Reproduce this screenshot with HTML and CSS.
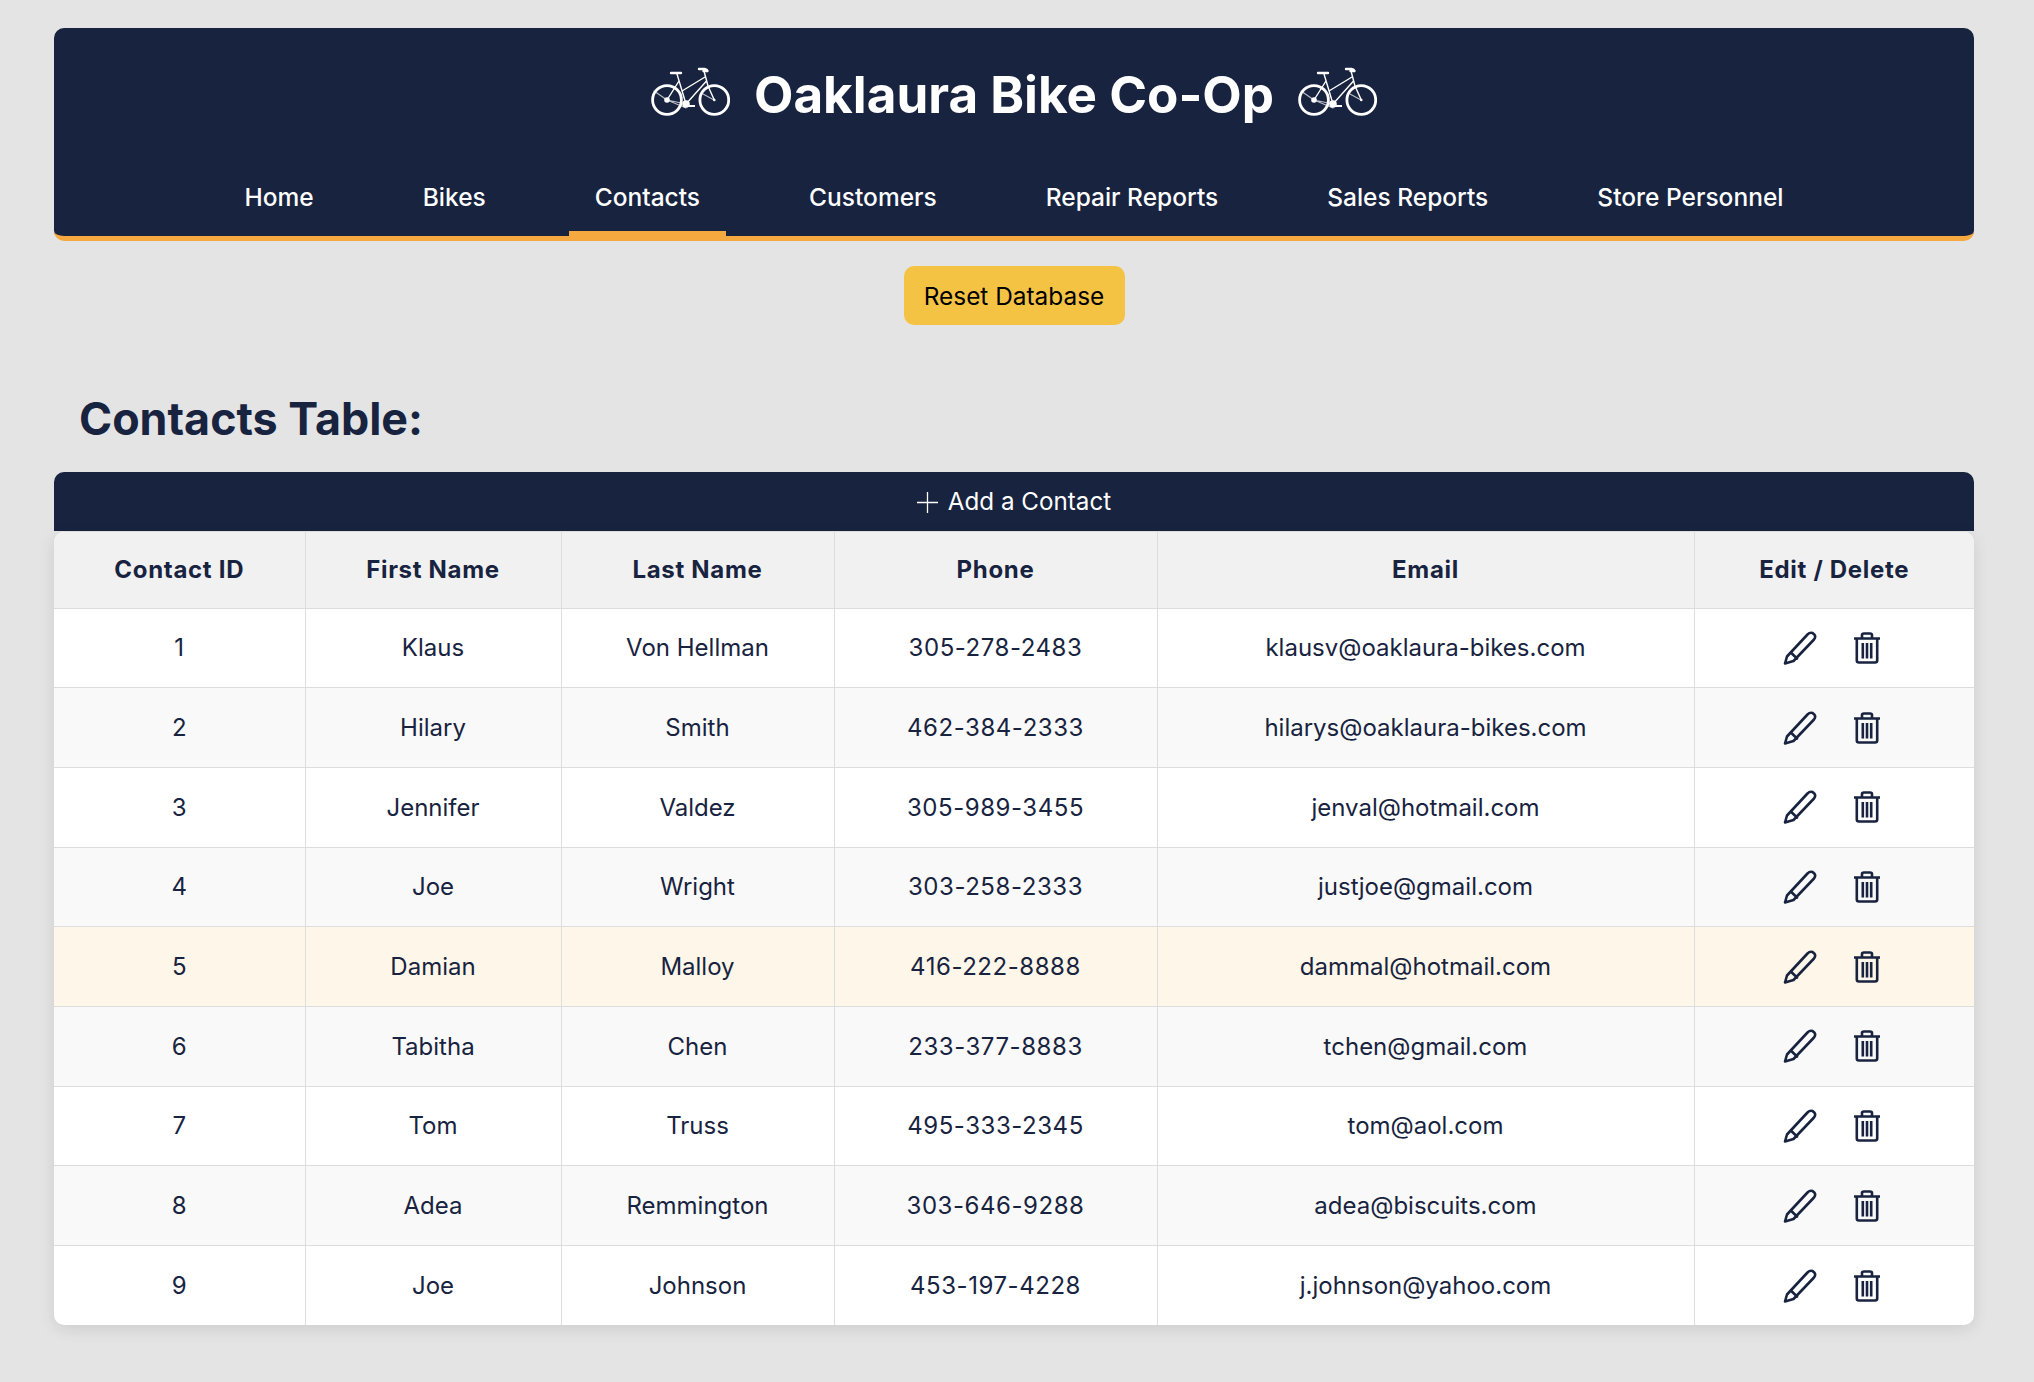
FILE: index.html
```html
<!DOCTYPE html>
<html lang="en">
<head>
<meta charset="utf-8">
<title>Oaklaura Bike Co-Op</title>
<link rel="stylesheet" href="styles.css">
</head>
<body>
<svg class="defs" width="0" height="0" aria-hidden="true">
  <defs>
    <symbol id="bike" viewBox="0 0 79 49">
      <g fill="none" stroke="#fff" stroke-linecap="round" stroke-linejoin="round">
        <circle cx="16" cy="33" r="14.4" stroke-width="2.800"/>
        <circle cx="63.3" cy="33" r="14.4" stroke-width="2.800"/>
        <path d="M26 7 35 37M53 4 57 19 63.3 33M54 10 31 24M55.5 14 35 37M28 14 16 33" stroke-width="1.400"/>
        <path d="M16 33 35 37M16 33 35 41M3 24 16 33M52 27 63 33" stroke-width="1.100" opacity=".7"/>
        <path d="M20 6h10M48 2h5.5q2.500 .5 3 2h-4" stroke-width="2.400"/>
      </g>
      <circle cx="35" cy="37" r="3.800" fill="#fff"/>
      <circle cx="16" cy="33" r="2.800" fill="#fff"/>
      <circle cx="63.300" cy="33" r="1.300" fill="#fff"/>
      <rect x="36" y="38" width="8" height="2" fill="#fff"/>
    </symbol>
    <symbol id="pencil" viewBox="0 0 34 34">
      <path d="M2 32.500 4 25.500 24.500 3.500Q27 1 29.500 2L31.500 3.800Q33 6 31 8.500L10.500 30ZM7.800 21.500 14 27.500" fill="none" stroke="currentColor" stroke-width="2.600" stroke-linejoin="round" stroke-linecap="round"/>
    </symbol>
    <symbol id="trash" viewBox="0 0 28 32">
      <path d="M1 6.500H27M9 6V3Q9 1.500 11 1.500H17Q19 1.500 19 3V6M3.800 7V28.500Q3.800 30.500 6 30.500H22Q24.200 30.500 24.200 28.500V7M9.800 11V26.500M14 11V26.500M18.200 11V26.500" fill="none" stroke="currentColor" stroke-width="2.600"/>
    </symbol>
  </defs>
</svg>
<div class="page">
  <header class="site-header">
    <div class="brand">
      <svg class="bike"><use href="#bike"/></svg>
      <h1 class="brand-title">Oaklaura Bike Co-Op</h1>
      <svg class="bike"><use href="#bike"/></svg>
    </div>
    <nav class="nav">
      <a class="nav-link" href="#">Home</a>
      <a class="nav-link" href="#">Bikes</a>
      <a class="nav-link is-active" href="#">Contacts</a>
      <a class="nav-link" href="#">Customers</a>
      <a class="nav-link" href="#">Repair Reports</a>
      <a class="nav-link" href="#">Sales Reports</a>
      <a class="nav-link" href="#">Store Personnel</a>
    </nav>
  </header>
  <div class="reset-row"><button class="reset-btn" type="button">Reset Database</button></div>
  <h2 class="section-title">Contacts Table:</h2>
  <button class="add-bar" type="button">
    <svg class="plus" viewBox="0 0 21 21" aria-hidden="true"><path d="M0 10.500H21M10.500 0V21" stroke="#fff" stroke-width="1.300"/></svg>
    <span>Add a Contact</span>
  </button>
  <div class="table-card">
    <table class="contacts">
      <colgroup>
        <col class="c-id"><col class="c-first"><col class="c-last"><col class="c-phone"><col class="c-email"><col class="c-actions">
      </colgroup>
      <thead>
        <tr><th>Contact ID</th><th>First Name</th><th>Last Name</th><th>Phone</th><th>Email</th><th>Edit / Delete</th></tr>
      </thead>
      <tbody>
        <tr><td>1</td><td>Klaus</td><td>Von Hellman</td><td class="phone">305-278-2483</td><td>klausv@oaklaura-bikes.com</td><td><div class="actions"><svg class="i-pencil"><use href="#pencil"/></svg><svg class="i-trash"><use href="#trash"/></svg></div></td></tr>
        <tr><td>2</td><td>Hilary</td><td>Smith</td><td class="phone">462-384-2333</td><td>hilarys@oaklaura-bikes.com</td><td><div class="actions"><svg class="i-pencil"><use href="#pencil"/></svg><svg class="i-trash"><use href="#trash"/></svg></div></td></tr>
        <tr><td>3</td><td>Jennifer</td><td>Valdez</td><td class="phone">305-989-3455</td><td>jenval@hotmail.com</td><td><div class="actions"><svg class="i-pencil"><use href="#pencil"/></svg><svg class="i-trash"><use href="#trash"/></svg></div></td></tr>
        <tr><td>4</td><td>Joe</td><td>Wright</td><td class="phone">303-258-2333</td><td>justjoe@gmail.com</td><td><div class="actions"><svg class="i-pencil"><use href="#pencil"/></svg><svg class="i-trash"><use href="#trash"/></svg></div></td></tr>
        <tr class="is-hover"><td>5</td><td>Damian</td><td>Malloy</td><td class="phone">416-222-8888</td><td>dammal@hotmail.com</td><td><div class="actions"><svg class="i-pencil"><use href="#pencil"/></svg><svg class="i-trash"><use href="#trash"/></svg></div></td></tr>
        <tr><td>6</td><td>Tabitha</td><td>Chen</td><td class="phone">233-377-8883</td><td>tchen@gmail.com</td><td><div class="actions"><svg class="i-pencil"><use href="#pencil"/></svg><svg class="i-trash"><use href="#trash"/></svg></div></td></tr>
        <tr><td>7</td><td>Tom</td><td>Truss</td><td class="phone">495-333-2345</td><td>tom@aol.com</td><td><div class="actions"><svg class="i-pencil"><use href="#pencil"/></svg><svg class="i-trash"><use href="#trash"/></svg></div></td></tr>
        <tr><td>8</td><td>Adea</td><td>Remmington</td><td class="phone">303-646-9288</td><td>adea@biscuits.com</td><td><div class="actions"><svg class="i-pencil"><use href="#pencil"/></svg><svg class="i-trash"><use href="#trash"/></svg></div></td></tr>
        <tr><td>9</td><td>Joe</td><td>Johnson</td><td class="phone">453-197-4228</td><td>j.johnson@yahoo.com</td><td><div class="actions"><svg class="i-pencil"><use href="#pencil"/></svg><svg class="i-trash"><use href="#trash"/></svg></div></td></tr>
      </tbody>
    </table>
  </div>
</div>
</body>
</html>
```
FILE: styles.css
```css
* { box-sizing: border-box; }
html, body { margin: 0; }
body {
  background: #e4e4e4;
  color: #18233f;
  font-family: Inter, "Liberation Sans", sans-serif;
  font-size: 24px;
}
.defs { position: absolute; }
.page { padding: 28px 60px 58px 54px; }
.site-header {
  height: 213px;
  background: #18233f;
  border-bottom: 5px solid #f5a93f;
  border-radius: 10px;
  color: #fff;
}
.brand {
  display: flex;
  justify-content: center;
  align-items: center;
  gap: 24px;
  height: 126px;
}
.bike { width: 79px; height: 49px; }
.brand-title { margin: 0; padding-top: 5px; font-size: 51.2px; font-weight: 700; line-height: 60px; }
.nav { display: flex; justify-content: center; gap: 58px; height: 82px; }
.nav-link {
  display: flex;
  align-items: center;
  padding: 8px 25.5px 0;
  color: #fff;
  text-decoration: none;
  font-size: 24.5px;
  font-weight: 500;
  border-bottom: 5px solid transparent;
}
.nav-link.is-active { border-bottom-color: #f5a93f; }
.reset-row { display: flex; justify-content: center; margin-top: 25px; }
.reset-btn {
  width: 221px;
  height: 59px;
  padding: 0;
  border: 0;
  border-radius: 10px;
  background: #f5c344;
  color: #000;
  font: 400 24.4px Inter, sans-serif;
}
.section-title {
  margin: 65px 0 0;
  padding-left: 25px;
  height: 82px;
  font-size: 44.8px;
  line-height: 58px;
  font-weight: 700;
}
.add-bar {
  display: flex;
  justify-content: center;
  align-items: center;
  gap: 10px;
  width: 100%;
  height: 59px;
  padding: 0;
  border: 0;
  border-radius: 10px 10px 0 0;
  background: #18233f;
  color: #fff;
  font: 400 24.2px Inter, sans-serif;
}
.plus { width: 21px; height: 21px; margin-top: 2px; }
.table-card {
  margin-top: 1px;
  background: #fff;
  border-radius: 10px;
  overflow: hidden;
  box-shadow: 0 4px 16px rgba(0, 0, 0, .1);
}
.contacts { width: 100%; border-collapse: collapse; table-layout: fixed; }
.c-id { width: 251px; }
.c-first { width: 256px; }
.c-last { width: 273px; }
.c-phone { width: 323px; }
.c-email { width: 537px; }
.contacts th, .contacts td {
  text-align: center;
  border-right: 1px solid #ddd;
  border-bottom: 1px solid #ddd;
  padding: 0;
}
.contacts th:last-child, .contacts td:last-child { border-right: 0; }
.contacts tr:last-child td { border-bottom: 0; }
.contacts th { height: 76px; background: #f1f1f1; font-weight: 700; letter-spacing: .7px; }
.contacts td { height: 79.7px; font-weight: 400; }
.contacts td.phone { letter-spacing: .55px; }
.contacts tbody tr:nth-child(even) td { background: #f9f9f9; }
.contacts tbody tr.is-hover td { background: #fef6e9; }
.actions { display: flex; justify-content: center; align-items: center; gap: 36px; margin-left: -4px; color: #18233f; }
.i-pencil { width: 34px; height: 34px; }
.i-trash { width: 28px; height: 32px; }
```
